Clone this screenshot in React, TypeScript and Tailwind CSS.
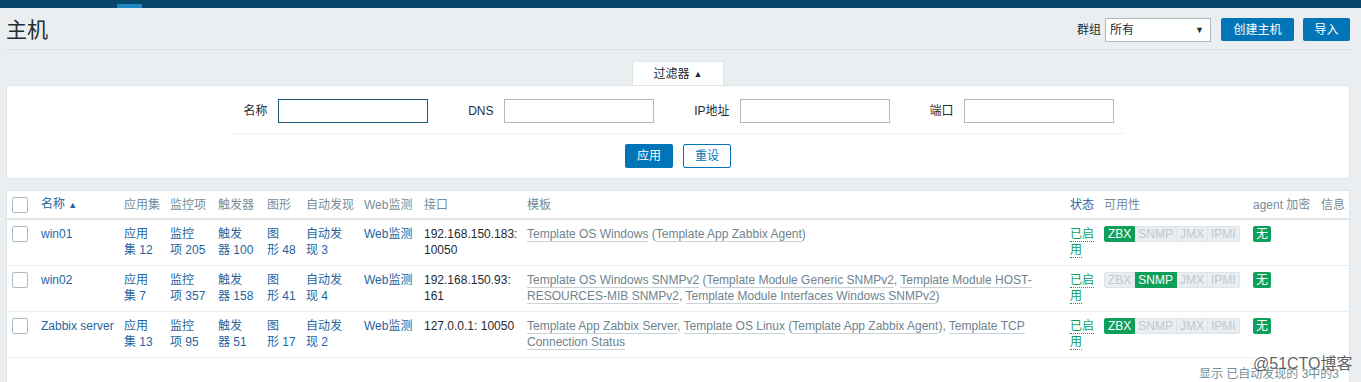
import React from 'react';

type Host = {
  name: string;
  apps: [string, string];
  items: [string, string];
  triggers: [string, string];
  graphs: [string, string];
  discovery: [string, string];
  iface: React.ReactNode;
  templates: React.ReactNode;
  active: 'ZBX' | 'SNMP';
};

const T: React.FC<{ children: React.ReactNode }> = ({ children }) => (
  <span className="border-b border-[#c9d2d7]">{children}</span>
);

const hosts: Host[] = [
  {
    name: 'win01',
    apps: ['应用', '集 12'],
    items: ['监控', '项 205'],
    triggers: ['触发', '器 100'],
    graphs: ['图', '形 48'],
    discovery: ['自动发', '现 3'],
    iface: <>192.168.150.183:<br />10050</>,
    templates: (
      <>
        <T>Template OS Windows</T> (<T>Template App Zabbix Agent</T>)
      </>
    ),
    active: 'ZBX',
  },
  {
    name: 'win02',
    apps: ['应用', '集 7'],
    items: ['监控', '项 357'],
    triggers: ['触发', '器 158'],
    graphs: ['图', '形 41'],
    discovery: ['自动发', '现 4'],
    iface: <>192.168.150.93:<br />161</>,
    templates: (
      <>
        <T>Template OS Windows SNMPv2</T> (<T>Template Module Generic SNMPv2</T>,{' '}
        <T>Template Module HOST-RESOURCES-MIB SNMPv2</T>,{' '}
        <T>Template Module Interfaces Windows SNMPv2</T>)
      </>
    ),
    active: 'SNMP',
  },
  {
    name: 'Zabbix server',
    apps: ['应用', '集 13'],
    items: ['监控', '项 95'],
    triggers: ['触发', '器 51'],
    graphs: ['图', '形 17'],
    discovery: ['自动发', '现 2'],
    iface: <>127.0.0.1: 10050</>,
    templates: (
      <>
        <T>Template App Zabbix Server</T>, <T>Template OS Linux</T> (
        <T>Template App Zabbix Agent</T>), <T>Template TCP Connection Status</T>
      </>
    ),
    active: 'ZBX',
  },
];

const Checkbox = () => (
  <span className="block w-[16px] h-[16px] bg-white border border-[#acbbc2] rounded-[2px]" />
);

const TwoLine: React.FC<{ lines: [string, string] }> = ({ lines }) => (
  <span className="text-[#1f65a0]">
    {lines[0]}
    <br />
    {lines[1]}
  </span>
);

const Availability: React.FC<{ active: 'ZBX' | 'SNMP' }> = ({ active }) => (
  <div className="flex">
    {['ZBX', 'SNMP', 'JMX', 'IPMI'].map((k, i) => (
      <span
        key={k}
        className={
          'h-[16px] px-[3px] leading-[14px] border ' +
          (k === active
            ? 'bg-[#0e9f5b] border-[#0e9f5b] text-white'
            : 'bg-[#ebeef0] border-[#dfe4e7] text-[#c0c9ce]') +
          (i === 0 ? ' rounded-l-[2px]' : ' border-l-0') +
          (i === 3 ? ' rounded-r-[2px]' : '')
        }
      >
        {k}
      </span>
    ))}
  </div>
);

const FilterField: React.FC<{ label: string; focused?: boolean; w: string }> = ({
  label,
  focused,
  w,
}) => (
  <>
    <span className={`${w} text-right pr-[10px] text-[#1f2c33]`}>{label}</span>
    <input
      className={
        'w-[150px] h-[24px] bg-white border outline-none px-[5px] ' +
        (focused ? 'border-[#20597e]' : 'border-[#acbbc2]')
      }
    />
  </>
);

export default function App() {
  const th = 'h-[28px] px-[5px] text-left font-normal text-[#768d99] whitespace-nowrap';
  const td = 'px-[5px] pt-[6px] pb-[7px] align-top border-b border-[#ebeef0]';

  return (
    <div className="relative min-h-[382px] bg-[#ebeef0] text-[12px] leading-[16px] text-[#1f2c33] font-['Liberation_Sans','Noto_Sans_CJK_SC',sans-serif] overflow-hidden">
      {/* top bar */}
      <div className="h-[8px] bg-[#0a466a] pl-[117px] flex items-end">
        <div className="w-[25px] h-[4px] bg-[#1c87c0]" />
      </div>

      {/* header */}
      <div className="ml-[6px] w-[1346px] h-[42px] pt-[2px] flex items-center justify-between border-b border-[#dde2e5]">
        <h1 className="text-[21px] leading-[24px] text-[#1f2c33]">主机</h1>
        <div className="flex items-center pr-[2px]">
          <span className="mr-[4px]">群组</span>
          <div className="w-[106px] h-[24px] bg-white border border-[#acbbc2] flex items-center justify-between pl-[4px] pr-[6px]">
            <span>所有</span>
            <span className="text-[9px]">▼</span>
          </div>
          <button className="ml-[10px] w-[73px] h-[23px] bg-[#0275b8] text-white rounded-[2px]">
            创建主机
          </button>
          <button className="ml-[9px] w-[47px] h-[23px] bg-[#0275b8] text-white rounded-[2px]">
            导入
          </button>
        </div>
      </div>

      {/* filter tab */}
      <div className="mt-[11px] flex">
        <div className="ml-[632px] w-[92px] h-[24px] bg-white border border-b-0 border-[#dfe4e7] flex items-center justify-center">
          过滤器 <span className="ml-[4px] text-[9px]">▲</span>
        </div>
      </div>

      {/* filter panel */}
      <div className="ml-[6px] w-[1344px] h-[94px] bg-white border border-[#dfe4e7] pt-[13px] flex flex-col items-center">
        <div className="w-[891px] flex items-center pb-[10px] border-b border-[#edf0f2]">
          <FilterField label="名称" w="w-[45px]" focused />
          <FilterField label="DNS" w="w-[76px]" />
          <FilterField label="IP地址" w="w-[86px]" />
          <FilterField label="端口" w="w-[74px]" />
        </div>
        <div className="mt-[10px] flex gap-[10px]">
          <button className="w-[48px] h-[24px] bg-[#0275b8] text-white rounded-[2px]">应用</button>
          <button className="w-[48px] h-[24px] bg-white text-[#0275b8] border border-[#0275b8] rounded-[2px]">
            重设
          </button>
        </div>
      </div>

      {/* hosts table */}
      <div className="mt-[11px] ml-[6px] w-[1344px] bg-white border border-[#dfe4e7] border-b-0 min-h-[200px]">
        <table className="w-full table-fixed border-collapse">
          <colgroup>
            <col className="w-[29px]" />
            <col className="w-[83px]" />
            <col className="w-[46px]" />
            <col className="w-[48px]" />
            <col className="w-[49px]" />
            <col className="w-[39px]" />
            <col className="w-[58px]" />
            <col className="w-[60px]" />
            <col className="w-[103px]" />
            <col className="w-[543px]" />
            <col className="w-[34px]" />
            <col className="w-[149px]" />
            <col className="w-[68px]" />
            <col />
          </colgroup>
          <thead>
            <tr className="border-b-2 border-[#dfe4e7]">
              <th className={th}>
                <Checkbox />
              </th>
              <th className={th + ' !text-[#1f65a0]'}>
                名称 <span className="text-[9px]">▲</span>
              </th>
              <th className={th}>应用集</th>
              <th className={th}>监控项</th>
              <th className={th}>触发器</th>
              <th className={th}>图形</th>
              <th className={th}>自动发现</th>
              <th className={th}>Web监测</th>
              <th className={th}>接口</th>
              <th className={th}>模板</th>
              <th className={th + ' !text-[#1f65a0]'}>状态</th>
              <th className={th}>可用性</th>
              <th className={th}>agent 加密</th>
              <th className={th}>信息</th>
            </tr>
          </thead>
          <tbody>
            {hosts.map((h) => (
              <tr key={h.name}>
                <td className={td}>
                  <Checkbox />
                </td>
                <td className={td + ' text-[#1f65a0] whitespace-nowrap'}>{h.name}</td>
                <td className={td}>
                  <TwoLine lines={h.apps} />
                </td>
                <td className={td}>
                  <TwoLine lines={h.items} />
                </td>
                <td className={td}>
                  <TwoLine lines={h.triggers} />
                </td>
                <td className={td}>
                  <TwoLine lines={h.graphs} />
                </td>
                <td className={td}>
                  <TwoLine lines={h.discovery} />
                </td>
                <td className={td + ' text-[#1f65a0] whitespace-nowrap'}>Web监测</td>
                <td className={td + ' whitespace-nowrap'}>{h.iface}</td>
                <td className={td + ' text-[#6f838e]'}>{h.templates}</td>
                <td className={td + ' text-[#0e9f5b]'}>
                  <span className="border-b border-dotted border-[#0e9f5b]">
                    已启
                    <br />用
                  </span>
                </td>
                <td className={td}>
                  <Availability active={h.active} />
                </td>
                <td className={td}>
                  <span className="inline-block h-[16px] px-[3px] leading-[16px] bg-[#0e9f5b] text-white rounded-[2px]">
                    无
                  </span>
                </td>
                <td className={td} />
              </tr>
            ))}
          </tbody>
        </table>
        <div className="pt-[8px] pr-[10px] text-right text-[#768d99]">显示 已自动发现的 3中的3</div>
      </div>

      {/* watermark */}
      <div className="absolute left-[1253px] top-[354px] text-[16px] leading-[20px] text-[#3a3a3a]/80 whitespace-nowrap">
        @51CTO博客
      </div>
    </div>
  );
}
